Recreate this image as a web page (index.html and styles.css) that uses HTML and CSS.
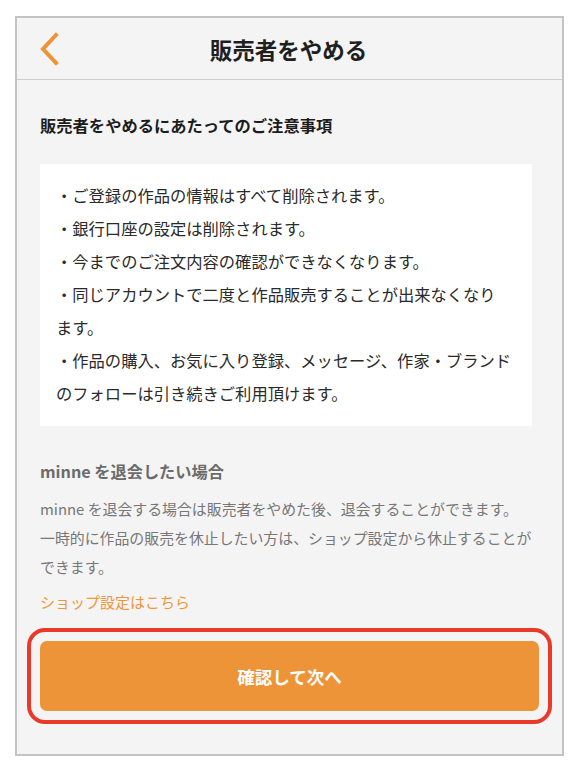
FILE: index.html
```html
<!DOCTYPE HTML>
<html>

<head>
    <meta charset="UTF-8">
    <link rel="stylesheet" href="styles.css">
</head>

<body>

    <div class="screen">
        <div class="header">
            <a class="back" href="#">
                <svg width="24" height="34" viewBox="0 0 24 34">
                    <path d="M17 3 L4 17 L17 31" fill="none" stroke="#ee9436" stroke-width="4" stroke-linecap="square" stroke-linejoin="miter"/>
                </svg>
            </a>
            <h1 class="title">販売者をやめる</h1>
        </div>

        <div class="content">
            <h2 class="section-title">販売者をやめるにあたってのご注意事項</h2>

            <ul class="notes">
                <li>・ご登録の作品の情報はすべて削除されます。</li>
                <li>・銀行口座の設定は削除されます。</li>
                <li>・今までのご注文内容の確認ができなくなります。</li>
                <li>・同じアカウントで二度と作品販売することが出来なくなり<br>ます。</li>
                <li>・作品の購入、お気に入り登録、メッセージ、作家・ブランドのフォローは引き続きご利用頂けます。</li>
            </ul>

            <h3 class="sub-title">minne を退会したい場合</h3>
            <p class="sub-text">minne を退会する場合は販売者をやめた後、退会することができます。<br>一時的に作品の販売を休止したい方は、ショップ設定から休止することができます。</p>
            <a class="link" href="#">ショップ設定はこちら</a>
        </div>

        <div class="action">
            <div class="highlight">
                <button class="next-btn">確認して次へ</button>
            </div>
        </div>
    </div>

</body>

</html>
```

FILE: styles.css
```css
body {
    margin: 0;
    background-color: #fff;
    font-family: "Noto Sans CJK JP", "Noto Sans", sans-serif;
}

.screen {
    box-sizing: border-box;
    width: 549px;
    height: 740px;
    margin: 16px 0 0 15px;
    border: 2px solid #c4c4c4;
    background-color: #f4f4f4;
}

.header {
    position: relative;
    height: 61px;
    border-bottom: 1px solid #cccccc;
    display: flex;
    align-items: center;
    justify-content: center;
}

.back {
    position: absolute;
    left: 22px;
    top: 14px;
    display: block;
    width: 24px;
    height: 34px;
}

.back svg {
    display: block;
}

.title {
    margin: 0 0 0 -2px;
    font-size: 22.5px;
    font-weight: bold;
    color: #1f1f1f;
    line-height: 30px;
}

.content {
    padding: 33px 30px 0 23px;
}

.section-title {
    margin: 0;
    font-size: 16.3px;
    font-weight: bold;
    line-height: 24px;
    color: #1c1c1c;
}

.notes {
    margin: 27px 0 0 0;
    padding: 15px 16px 16px 16px;
    list-style: none;
    background-color: #fff;
    font-size: 16.3px;
    line-height: 33px;
    color: #2a2a2a;
}

.notes li {
    margin: 0;
}

.sub-title {
    margin: 33px 0 0 0;
    font-size: 16.2px;
    font-weight: bold;
    line-height: 24px;
    color: #6b6b6b;
}

.sub-text {
    margin: 11px 0 0 0;
    font-size: 14.9px;
    line-height: 29px;
    color: #777777;
}

.link {
    display: block;
    margin-top: 9px;
    font-size: 15px;
    line-height: 24px;
    color: #f0963a;
    text-decoration: none;
}

.action {
    padding: 14px 10px 0 10px;
}

.highlight {
    border: 4px solid #e8392b;
    border-radius: 18px;
    padding: 9px;
}

.next-btn {
    display: block;
    width: 100%;
    height: 70px;
    border: none;
    border-radius: 7px;
    background-color: #ee9438;
    color: #fff;
    font-family: "Noto Sans CJK JP", "Noto Sans", sans-serif;
    font-size: 17.5px;
    font-weight: bold;
}
```
